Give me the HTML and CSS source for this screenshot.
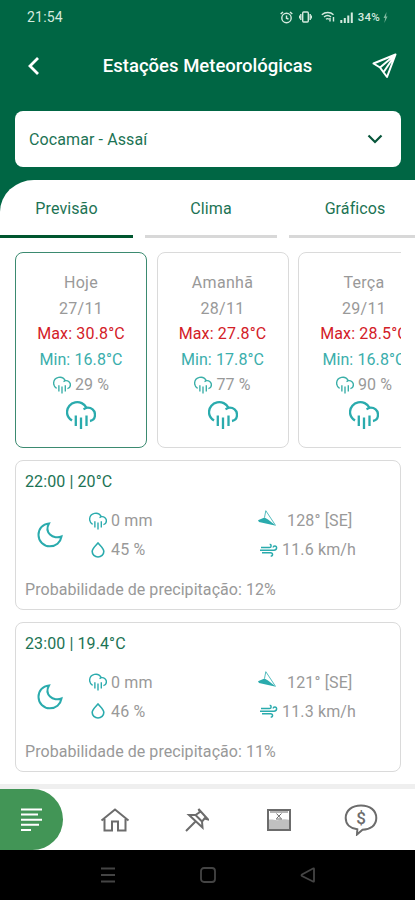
FILE: index.html
```html
<!DOCTYPE html>
<html lang="pt-br">
<head>
  <meta charset="UTF-8">
  <meta name="viewport" content="width=device-width, initial-scale=1.0">
  <title>Estações Meteorológicas</title>
  <link rel="stylesheet" href="styles.css">
</head>
<body>
  <svg class="icones" width="0" height="0">
    <symbol id="chuva" viewBox="0 0 30 30">
      <path d="M6 20.500C2.800 18.500 1 15.500 1 12a10.300 10.300 0 0 1 19.500-4.200c5-.6 8.500 2.700 8.500 6.900 0 3.300-2 5.800-5 6.300M17.500 9.200l3-1.400"/>
      <path d="M9.800 15.500v10.500M15 17.500V29M20.500 15.500V26"/>
    </symbol>
    <symbol id="lua" viewBox="0 0 26 26">
      <path d="M12 1.500C5.500 2 1.500 7 1.500 13a11.300 11.300 0 0 0 11.300 11.300c6 0 10.700-3.800 11.700-9.800-3.500 1.500-8.500 1-11.500-2-3-3-3-7.500-1-11z"/>
    </symbol>
    <symbol id="gota" viewBox="0 0 14 16">
      <path d="M7 1C5 3.500 1.200 6.500 1.200 9.500a5.800 5.500 0 0 0 11.600 0C12.800 6.500 9 3.500 7 1z"/>
    </symbol>
    <symbol id="direcao" viewBox="0 0 18 16">
      <path class="cheio" d="M0 10.200L6.500 7.500 10 9.500 18 15.700 1 12z"/>
      <path class="fino" d="M6.500 7.500L7.800.7 17.500 15.300"/>
    </symbol>
    <symbol id="vento" viewBox="0 0 18 14">
      <path d="M1 4.500h8.500c2 0 2.300-3 .2-3.300M0 7.200h14c3 0 3.600-4.200.8-4.200-1.100 0-1.600.7-1.600 1.500M2 9.800h8.500c2.800 0 2.600 3.600.2 3.300"/>
    </symbol>
  </svg>

  <header class="topo">
    <div class="status">
      <span>21:54</span>
      <div class="status-direita">
        <svg width="13" height="13" viewBox="0 0 13 13"><circle cx="6.500" cy="7" r="4.700"/><path d="M6.500 4.500V7.200l2 1M.7 3L3 .9M12.300 3L10 .9"/></svg>
        <svg class="vibra" width="13" height="12" viewBox="0 0 13 12"><rect x="3.700" y="1" width="5.600" height="10" rx="1"/><path d="M1.800 3v6M11.200 3v6M.3 4.500v3M12.700 4.500v3"/></svg>
        <svg class="wifi" width="15" height="12" viewBox="0 0 15 12"><path d="M.8 3.700c3.500-3 8.500-3 11.700 0M3 6c2.200-1.800 5-1.800 7 0M5 8.200c1-.8 2-.8 3 0M9 10.500V7M12.500 6v4.500"/></svg>
        <svg class="sinal" width="13" height="12" viewBox="0 0 13 12"><path d="M1.300 12V9M4.800 12V7M8.300 12V4.500M11.800 12V1.500"/></svg>
        <span class="bateria">34%</span>
        <svg class="raio" width="5" height="11" viewBox="0 0 5 11"><path d="M3.500 0L.5 6h1.700L1.300 11 4.500 4.500H3z"/></svg>
      </div>
    </div>
    <div class="titulo">
      <svg width="14" height="20" viewBox="0 0 14 20"><path d="M11 2L3 10l8 8"/></svg>
      <h1>Estações Meteorológicas</h1>
      <svg class="enviar" width="25" height="26" viewBox="0 0 25 26"><path d="M23.500 1.500L1.500 10.500l6.500 4 7 9.500zM8 14.500L23.500 1.500 12 18.500"/></svg>
    </div>
    <div class="seletor">
      <span>Cocamar - Assaí</span>
      <svg width="16" height="10" viewBox="0 0 16 10"><path d="M1.500 1.500L8 8l6.500-6.500"/></svg>
    </div>
  </header>

  <main class="painel">
    <nav class="abas">
      <a class="aba ativa">Previsão</a>
      <a class="aba">Clima</a>
      <a class="aba">Gráficos</a>
    </nav>

    <div class="dias">
      <div class="dia ativo">
        <p>Hoje</p>
        <p>27/11</p>
        <p class="max">Max: 30.8°C</p>
        <p class="min">Min: 16.8°C</p>
        <p class="chance"><svg class="ic"><use href="#chuva"/></svg>29 %</p>
        <svg class="ic grande"><use href="#chuva"/></svg>
      </div>
      <div class="dia">
        <p>Amanhã</p>
        <p>28/11</p>
        <p class="max">Max: 27.8°C</p>
        <p class="min">Min: 17.8°C</p>
        <p class="chance"><svg class="ic"><use href="#chuva"/></svg>77 %</p>
        <svg class="ic grande"><use href="#chuva"/></svg>
      </div>
      <div class="dia">
        <p>Terça</p>
        <p>29/11</p>
        <p class="max">Max: 28.5°C</p>
        <p class="min">Min: 16.8°C</p>
        <p class="chance"><svg class="ic"><use href="#chuva"/></svg>90 %</p>
        <svg class="ic grande"><use href="#chuva"/></svg>
      </div>
    </div>

    <div class="hora">
      <h2>22:00 | 20°C</h2>
      <div class="dados">
        <svg class="ic lua"><use href="#lua"/></svg>
        <div class="coluna">
          <p><svg class="ic"><use href="#chuva"/></svg>0 mm</p>
          <p><svg class="ic gota"><use href="#gota"/></svg>45 %</p>
        </div>
        <div class="coluna">
          <p class="rumo"><svg class="ic direcao"><use href="#direcao"/></svg>128° [SE]</p>
          <p><svg class="ic vento"><use href="#vento"/></svg>11.6 km/h</p>
        </div>
      </div>
      <p class="prob">Probabilidade de precipitação: 12%</p>
    </div>

    <div class="hora">
      <h2>23:00 | 19.4°C</h2>
      <div class="dados">
        <svg class="ic lua"><use href="#lua"/></svg>
        <div class="coluna">
          <p><svg class="ic"><use href="#chuva"/></svg>0 mm</p>
          <p><svg class="ic gota"><use href="#gota"/></svg>46 %</p>
        </div>
        <div class="coluna">
          <p class="rumo"><svg class="ic direcao"><use href="#direcao"/></svg>121° [SE]</p>
          <p><svg class="ic vento"><use href="#vento"/></svg>11.3 km/h</p>
        </div>
      </div>
      <p class="prob">Probabilidade de precipitação: 11%</p>
    </div>
  </main>

  <nav class="menu">
    <a class="item atual">
      <svg width="22" height="24" viewBox="0 0 22 24"><path d="M0 1.500h21M0 6.500h17M0 11.700h21M0 16.700h18M0 22h10"/></svg>
    </a>
    <a class="item">
      <svg width="30" height="24" viewBox="0 0 30 24"><path d="M1.500 12.500L15 1.500l13.500 11M4.500 11v11.500h7.500v-9h6v9h7.500V11"/></svg>
    </a>
    <a class="item">
      <svg width="24" height="24" viewBox="0 0 24 24"><path d="M1 23l9.500-9.500M13.500 1l9.500 10.500-3.500-1-2.500 3 .5 6L4 7h6.500l4.500-3zM10.500 7l6.500 6.500"/></svg>
    </a>
    <a class="item">
      <svg class="nivel" width="24" height="22" viewBox="0 0 24 22"><path class="agua" d="M1 11c4-1.500 7 1 11 0s7-1 11 0v10H1z"/><rect x="1" y="1" width="22" height="20"/><path class="detalhe" d="M3 3h18M9.500 4.500l4.500 5M14.500 4.500l-5 5M9 10h6"/></svg>
    </a>
    <a class="item">
      <svg width="34" height="32" viewBox="0 0 34 32"><path d="M17 1.500c9 0 15.300 4.800 15.300 12.500S26 25.500 18.500 25.800L13 30.500l.3-5.200C6.500 24.500 1.700 20.500 1.700 14 1.700 6.300 8 1.500 17 1.500z"/><text x="17" y="19.500">$</text></svg>
    </a>
  </nav>

  <footer class="sistema">
    <svg width="16" height="16" viewBox="0 0 16 16"><path d="M1 1.500h14M1 8h14M1 14.500h14"/></svg>
    <svg width="16" height="16" viewBox="0 0 16 16"><rect x="1" y="1" width="14" height="14" rx="3"/></svg>
    <svg width="16" height="16" viewBox="0 0 16 16"><path d="M14 2v12q0 1-1 .5L2 9q-1-.800 0-1.500L13 1.500q1-.4 1 .5z"/></svg>
  </footer>
</body>
</html>
```

FILE: styles.css
```css
* {
  box-sizing: border-box;
}
body {
  font-family: Roboto, sans-serif;
  font-size: 16px;
  color: #999;
  background-color: #006644;
  margin: 0;
  height: 900px;
  display: flex;
  flex-direction: column;
  overflow: hidden;
}
h1, h2, p {
  margin: 0;
}
svg {
  display: block;
  flex: none;
  fill: none;
  stroke: currentColor;
}
.icones {
  position: absolute;
}

/* topo */
.topo {
  height: 180px;
  flex: none;
  color: #fff;
}
.status {
  height: 34px;
  padding: 0 27px 0 27px;
  display: flex;
  align-items: center;
  justify-content: space-between;
  font-size: 14px;
  letter-spacing: 0.2px;
  color: #d5eadf;
}
.status-direita {
  display: flex;
  align-items: center;
}
.status-direita svg {
  stroke-width: 1.4;
}
.vibra {
  margin-left: 6px;
}
.wifi {
  margin-left: 9px;
}
.status-direita .sinal {
  margin-left: 4px;
  stroke-width: 2;
}
.bateria {
  font-size: 11.5px;
  font-weight: 500;
  margin: 0 3px 0 5px;
}
.raio {
  fill: #7fb89f;
  stroke: none;
}
.titulo {
  height: 64px;
  padding: 0 18px 0 27px;
  display: flex;
  align-items: center;
  justify-content: space-between;
}
.titulo svg {
  stroke-width: 2.8;
}
.titulo .enviar {
  stroke-width: 2;
  stroke-linejoin: round;
}
.titulo h1 {
  font-size: 18.500px;
  font-weight: 500;
  letter-spacing: 0;
  margin-left: 2px;
}
.seletor {
  height: 56px;
  margin: 13px 14px 0 15px;
  padding: 0 18px 0 14px;
  display: flex;
  align-items: center;
  justify-content: space-between;
  background-color: #fff;
  border-radius: 8px;
  color: #1c7354;
  letter-spacing: 0.1px;
}
.seletor svg {
  stroke: #07553a;
  stroke-width: 2.2;
}

/* painel */
.painel {
  height: 604px;
  flex: none;
  background-color: #fff;
  border-top-left-radius: 34px 32px;
  overflow: hidden;
}
.abas {
  display: flex;
  gap: 12px;
  height: 58px;
}
.aba {
  flex: none;
  width: 132px;
  line-height: 57px;
  height: 58px;
  text-align: center;
  color: #1c7354;
  letter-spacing: 0.1px;
  border-bottom: 3px solid #d8d8d8;
}
.aba.ativa {
  width: 133px;
  border-color: #00562f;
}
.dias {
  display: flex;
  gap: 9.5px;
  margin: 14px 14px 12px 15px;
  overflow: hidden;
}
.dia {
  flex: none;
  width: 132px;
  height: 196px;
  padding-top: 17px;
  border: 1px solid #dadada;
  border-radius: 8px;
  text-align: center;
  line-height: 25.5px;
  letter-spacing: 0.3px;
}
.dia.ativo {
  border-color: #3b8a70;
}
.max {
  color: #d32027;
  letter-spacing: 0.15px;
}
.min {
  color: #3aaeac;
  letter-spacing: 0.1px;
}
.ic {
  width: 18px;
  height: 18px;
  color: #2aabad;
  stroke-width: 2.3;
}
.chance {
  display: flex;
  align-items: center;
  justify-content: center;
  gap: 4px;
  letter-spacing: 0.1px;
}
.chance .ic {
  color: #3aafa8;
}
.grande {
  width: 30px;
  height: 30px;
  margin: 2px auto 0;
}
.hora {
  height: 150px;
  margin: 0 14px 11.5px 15px;
  padding: 10px 9px;
  border: 1px solid #dadada;
  border-radius: 8px;
  letter-spacing: 0.15px;
}
.hora h2 {
  font-size: 16px;
  font-weight: 400;
  line-height: 22px;
  color: #1c7354;
  letter-spacing: 0.1px;
}
.dados {
  display: grid;
  grid-template-columns: 64px 170px 1fr;
  align-items: center;
  padding-top: 13px;
}
.lua {
  width: 26px;
  height: 26px;
  margin-left: 12px;
  stroke-width: 2;
}
.coluna p {
  display: flex;
  align-items: center;
  gap: 4px;
  height: 29px;
}
.coluna .gota {
  width: 14px;
  height: 16px;
  margin: 0 2px;
  stroke-width: 1.6;
}
.coluna .rumo {
  gap: 11px;
}
.coluna .direcao {
  height: 16px;
  margin: -6px 0 0 -1px;
}
.coluna .vento {
  height: 14px;
  margin-left: 1px;
  stroke-width: 1.5;
}
.cheio {
  fill: currentColor;
  stroke: none;
}
.fino {
  stroke-width: 0.8;
}
.prob {
  line-height: 22px;
  margin-top: 15px;
  letter-spacing: 0.05px;
}

/* menu inferior */
.menu {
  height: 66px;
  flex: none;
  display: flex;
  background-color: #fff;
  border-top: 5px solid #efefef;
  color: #6c6c6c;
}
.item {
  width: 82px;
  display: flex;
  align-items: center;
  justify-content: center;
  stroke-width: 2;
}
.item.atual {
  width: 63px;
  margin-right: 11px;
  background-color: #429556;
  border-radius: 0 31px 31px 0;
  color: #fff;
}
.menu text {
  fill: currentColor;
  stroke: none;
  font-size: 17px;
  font-weight: 500;
  text-anchor: middle;
}
.agua {
  fill: #c0c0c0;
  stroke: none;
}
.detalhe {
  stroke-width: 1;
}
.sistema {
  flex: 1;
  display: flex;
  justify-content: center;
  align-items: center;
  gap: 84px;
  background-color: #000;
  color: #444;
  stroke-width: 1.8;
}
```
